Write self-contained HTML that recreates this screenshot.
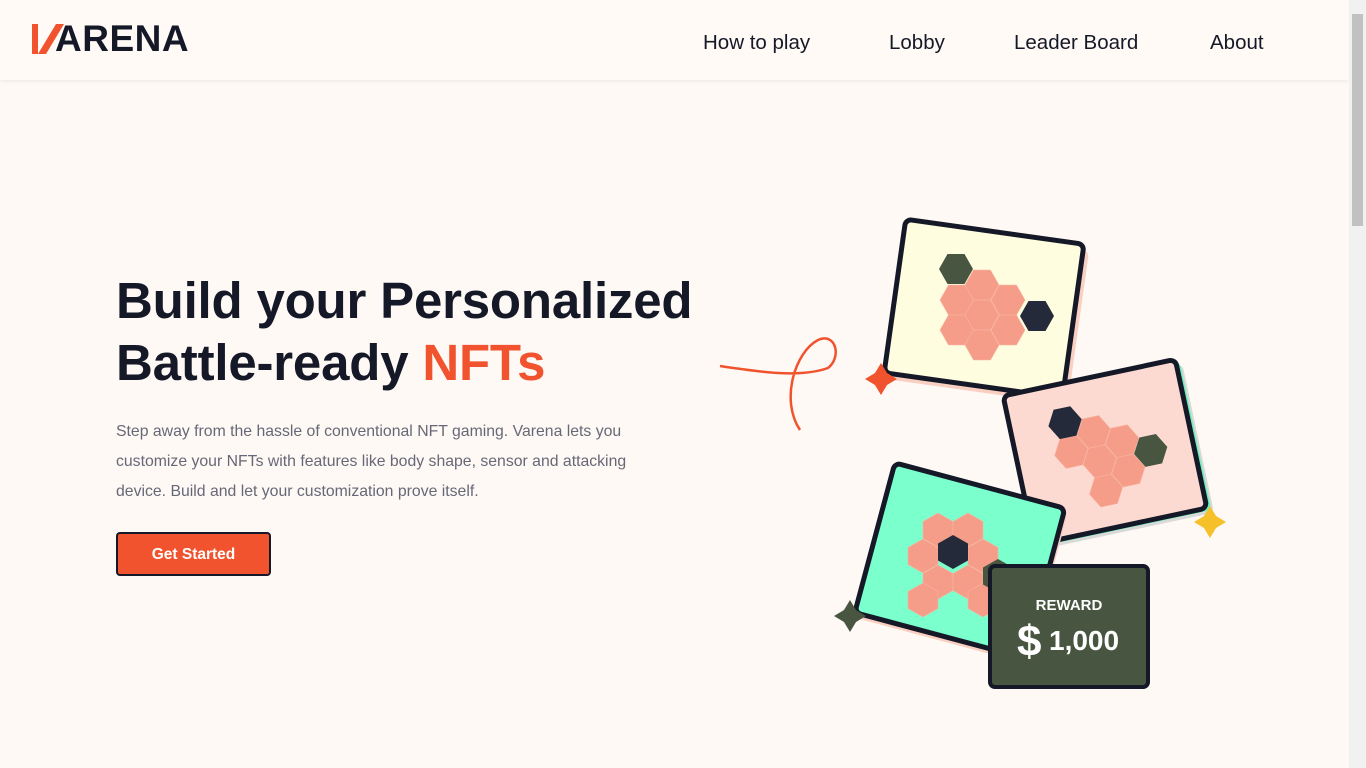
<!DOCTYPE html>
<html><head><meta charset="utf-8"><style>
*{margin:0;padding:0;box-sizing:border-box}
body{width:1366px;height:768px;overflow:hidden;background:#fef9f5;font-family:"Liberation Sans",sans-serif;position:relative;color:#151827}
.nav{position:absolute;left:0;top:0;width:1349px;height:80px;background:#fffaf6;box-shadow:0 1px 4px rgba(0,0,0,.08)}
.logo{position:absolute;left:32px;top:22px;font-weight:bold;font-size:37px;letter-spacing:0.5px;color:#151827;line-height:34px}
.nav a{position:absolute;top:31px;font-size:20.5px;color:#151827;text-decoration:none}
.sb{position:absolute;right:0;top:0;width:17px;height:768px;background:#f1f1f1}
.sb div{position:absolute;left:3px;top:14px;width:11px;height:212px;background:#c1c1c1}
h1{position:absolute;left:116px;top:270px;font-size:51px;line-height:62px;font-weight:bold;letter-spacing:-0.2px;color:#151827;white-space:nowrap}
h1 span{color:#f0532d}
p{position:absolute;left:116px;top:417px;width:535px;font-size:15.8px;line-height:30px;color:#676877}
.btn{position:absolute;left:116px;top:532px;width:155px;height:44px;background:#f0532d;border:2px solid #151827;border-radius:4px;color:#fff;font-weight:bold;font-size:15.5px;text-align:center;line-height:42px}
</style></head><body>
<div class="nav">
<div class="logo"><svg width="32" height="30" style="position:absolute;left:0;top:2px" viewBox="0 0 32 30"><polygon points="0,0 6,0 6,30 0,30" fill="#f0532d"/><polygon points="6,30 24,0 32,0 14,30" fill="#f0532d"/></svg><span style="margin-left:23px">ARENA</span></div>
<a style="left:703px">How to play</a>
<a style="left:889px">Lobby</a>
<a style="left:1014px">Leader Board</a>
<a style="left:1210px">About</a>
</div>
<div class="sb"><div></div></div>
<h1>Build your Personalized<br>Battle-ready <span>NFTs</span></h1>
<p>Step away from the hassle of conventional NFT gaming. Varena lets you customize your NFTs with features like body shape, sensor and attacking device. Build and let your customization prove itself.</p>
<div class="btn">Get Started</div>
<svg style="position:absolute;left:0;top:0" width="1366" height="768">
<defs>
<polygon id="hf" points="-17,0 -8.5,-15 8.5,-15 17,0 8.5,15 -8.5,15"/>
<polygon id="hp" points="0,-17 15,-8.5 15,8.5 0,17 -15,8.5 -15,-8.5"/>
<polygon id="st" points="0,-16 6,-6 16,0 6,6 0,16 -6,6 -16,0 -6,-6"/>
</defs>
<path d="M720,366 C760,372 800,378 828,368 C842,357 836,332 818,340 C795,352 780,400 800,430" fill="none" stroke="#f0532d" stroke-width="2.5"/>
<g transform="translate(984,309) rotate(8)">
<rect x="-84" y="-72" width="180" height="155" rx="6" fill="#f9cfc2"/>
<rect x="-90" y="-78" width="180" height="155" rx="6" fill="#fffddf" stroke="#151827" stroke-width="5"/>
</g>
<g fill="#f59d88" stroke="#f7b6a5" stroke-width="0.6">
<use href="#hf" x="957" y="300"/><use href="#hf" x="982" y="285"/><use href="#hf" x="1008" y="300"/><use href="#hf" x="957" y="330"/><use href="#hf" x="982" y="315"/><use href="#hf" x="1008" y="330"/><use href="#hf" x="982" y="345"/>
</g>
<use href="#hf" x="956" y="269" fill="#485641"/>
<use href="#hf" x="1037" y="316" fill="#252a3a"/>
<use href="#st" x="881" y="379" fill="#f0532d"/>
<g transform="translate(1105,452) rotate(-12)">
<rect x="-82" y="-70" width="176" height="152" rx="6" fill="#d9d9d9"/>
<rect x="-84" y="-73" width="176" height="152" rx="6" fill="#6ff0b8"/>
<rect x="-88" y="-76" width="176" height="152" rx="6" fill="#fddad1" stroke="#151827" stroke-width="5"/>
</g>
<g transform="rotate(-12 1105 452)">
<g fill="#f59d88" stroke="#f7b6a5" stroke-width="0.6">
<use href="#hf" x="1098" y="430"/><use href="#hf" x="1124" y="445"/><use href="#hf" x="1072" y="445"/><use href="#hf" x="1098" y="460"/><use href="#hf" x="1124" y="475"/><use href="#hf" x="1098" y="490"/>
</g>
<use href="#hf" x="1072" y="415" fill="#252a3a"/>
<use href="#hf" x="1150" y="460" fill="#485641"/>
</g>
<use href="#st" x="1210" y="522" fill="#f5c02a"/>
<g transform="translate(960,560) rotate(15)">
<rect x="-84" y="-72" width="176" height="155" rx="6" fill="#f9cfc2"/>
<rect x="-88" y="-77" width="176" height="155" rx="6" fill="#7affcd" stroke="#151827" stroke-width="5"/>
</g>
<g fill="#f59d88" stroke="#f7b6a5" stroke-width="0.6">
<use href="#hp" x="938" y="530"/><use href="#hp" x="968" y="530"/><use href="#hp" x="923" y="556"/><use href="#hp" x="983" y="556"/><use href="#hp" x="938" y="582"/><use href="#hp" x="968" y="582"/><use href="#hp" x="923" y="600"/><use href="#hp" x="983" y="600"/>
</g>
<use href="#hp" x="953" y="552" fill="#252a3a"/>
<use href="#hp" x="998" y="576" fill="#485641"/>
<use href="#st" x="850" y="616" fill="#485641"/>
<rect x="990" y="566" width="158" height="121" rx="5" fill="#485641" stroke="#151827" stroke-width="4"/>
<text x="1069" y="610" text-anchor="middle" font-family="Liberation Sans" font-weight="bold" font-size="15" fill="#fff">REWARD</text>
<text x="1017" y="656" font-family="Liberation Sans" font-weight="bold" font-size="44" fill="#fff">$</text>
<text x="1049" y="650" font-family="Liberation Sans" font-weight="bold" font-size="28" fill="#fff">1,000</text>
</svg>
</body></html>
